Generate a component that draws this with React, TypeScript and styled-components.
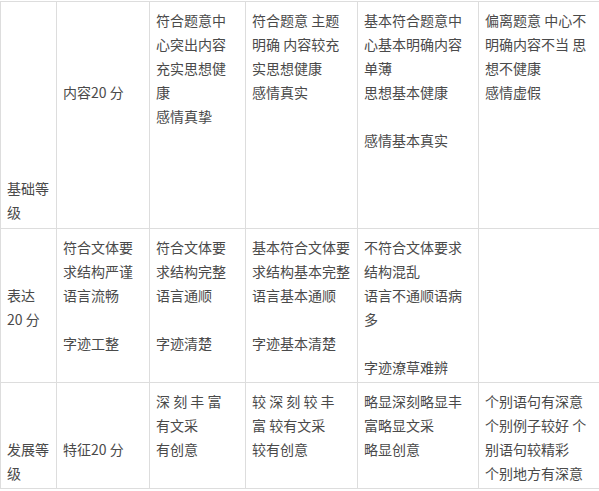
import React from "react";
import styled, { createGlobalStyle } from "styled-components";

const Global = createGlobalStyle`
  html, body {
    margin: 0;
    padding: 0;
    background: #ffffff;
    overflow: hidden;
  }
  body {
    font-family: "Noto Sans CJK SC", "Noto Sans", sans-serif;
  }
`;

const Page = styled.div`
  padding-top: 1px;
  width: 599px;
  overflow: hidden;
`;

const Grid = styled.div`
  display: grid;
  grid-template-columns: 56px 93px 96px 112px 121px 130px;
  grid-template-rows: 227px 154px 106px;
  border-top: 1px solid #dddddd;
  border-left: 1px solid #dddddd;
  width: max-content;
`;

const Cell = styled.div`
  box-sizing: border-box;
  border-right: 1px solid #dddddd;
  border-bottom: 1px solid #dddddd;
  padding: 6px 0 0 6px;
  overflow: hidden;
  color: #4a4a4a;
  font-size: 14px;
  line-height: 24px;
`;

const Line = styled.div`
  height: 24px;
  white-space: pre;
`;

type Row = string[][];

const rows: Row[] = [
  [
    ["", "", "", "", "", "", "", "基础等", "级"],
    ["", "", "", "内容20 分"],
    ["符合题意中", "心突出内容", "充实思想健", "康", "感情真挚"],
    ["符合题意 主题", "明确 内容较充", "实思想健康", "感情真实"],
    ["基本符合题意中", "心基本明确内容", "单薄", "思想基本健康", "", "感情基本真实"],
    ["偏离题意 中心不", "明确内容不当 思", "想不健康", "感情虚假"],
  ],
  [
    ["", "", "表达", "20 分"],
    ["符合文体要", "求结构严谨", "语言流畅", "", "字迹工整"],
    ["符合文体要", "求结构完整", "语言通顺", "", "字迹清楚"],
    ["基本符合文体要", "求结构基本完整", "语言基本通顺", "", "字迹基本清楚"],
    ["不符合文体要求", "结构混乱", "语言不通顺语病", "多", "", "字迹潦草难辨"],
    [],
  ],
  [
    ["", "", "发展等", "级"],
    ["", "", "特征20 分"],
    ["深 刻 丰 富", "有文采", "有创意"],
    ["较 深 刻 较 丰", "富 较有文采", "较有创意"],
    ["略显深刻略显丰", "富略显文采", "略显创意"],
    ["个别语句有深意", "个别例子较好 个", "别语句较精彩", "个别地方有深意"],
  ],
];

export default function App() {
  return (
    <Page>
      <Global />
      <Grid>
        {rows.map((row, r) =>
          row.map((cell, c) => (
            <Cell key={`${r}-${c}`}>
              {cell.map((line, i) => (
                <Line key={i}>{line === "" ? "\u00a0" : line}</Line>
              ))}
            </Cell>
          ))
        )}
      </Grid>
    </Page>
  );
}
